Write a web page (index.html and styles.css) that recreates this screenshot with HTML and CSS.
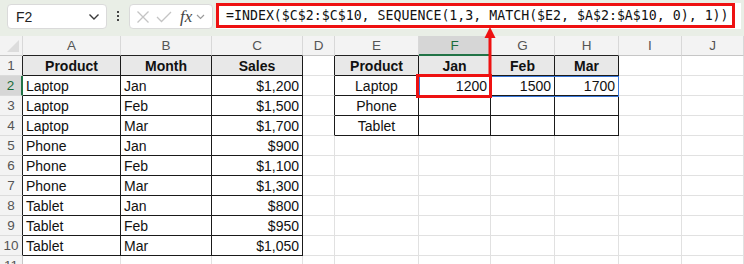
FILE: index.html
```html
<!DOCTYPE html>
<html lang="en">
<head>
    <meta charset="UTF-8">
    <meta name="viewport" content="width=device-width, initial-scale=1.0">
    <title>INDEX SEQUENCE MATCH</title>
    <link rel="stylesheet" href="styles.css">
</head>
<body>
    <div class="topbar">
        <div class="name-box">
            <span>F2</span>
            <svg width="12" height="8" viewBox="0 0 12 8"><polyline points="1.5,1.5 6,6 10.5,1.5" fill="none" stroke="#3a3a3a" stroke-width="1.4"/></svg>
        </div>
        <div class="dots"><i></i><i></i><i></i></div>
        <div class="fx-box">
            <svg width="14" height="14" viewBox="0 0 14 14"><path d="M1.5 1.5 L12.5 12.5 M12.5 1.5 L1.5 12.5" stroke="#c4c4c4" stroke-width="1.3"/></svg>
            <svg width="16" height="12" viewBox="0 0 16 12"><polyline points="1,6 5.5,10.5 15,1" fill="none" stroke="#c4c4c4" stroke-width="1.3"/></svg>
            <span class="fx">fx</span>
            <svg width="9" height="6" viewBox="0 0 9 6"><polyline points="1,1 4.5,4.5 8,1" fill="none" stroke="#9a9a9a" stroke-width="1.2"/></svg>
        </div>
        <div class="formula-wrap">
            <div class="formula">=INDEX($C$2:$C$10, SEQUENCE(1,3, MATCH($E2, $A$2:$A$10, 0), 1))</div>
        </div>
    </div>

    <div class="sheet">
        <!-- column headers -->
        <div class="ch corner"><span class="tri"></span></div>
        <div class="ch tb">A</div><div class="ch tb">B</div><div class="ch tb">C</div><div class="ch">D</div>
        <div class="ch tb">E</div><div class="ch active">F</div><div class="ch tb">G</div><div class="ch tb">H</div>
        <div class="ch">I</div><div class="ch">J</div>

        <!-- row 1 -->
        <div class="rh tb">1</div>
        <div class="c t h">Product</div><div class="c t h">Month</div><div class="c t h">Sales</div><div class="c dr"></div>
        <div class="c t h">Product</div><div class="c t h">Jan</div><div class="c t h">Feb</div><div class="c t h">Mar</div>
        <div class="c"></div><div class="c"></div>

        <!-- row 2 -->
        <div class="rh active">2</div>
        <div class="c t">Laptop</div><div class="c t">Jan</div><div class="c t r">$1,200</div><div class="c dr"></div>
        <div class="c t m">Laptop</div><div class="c t r">1200</div><div class="c t r">1500</div><div class="c t r">1700</div>
        <div class="c"></div><div class="c"></div>

        <!-- row 3 -->
        <div class="rh tb">3</div>
        <div class="c t">Laptop</div><div class="c t">Feb</div><div class="c t r">$1,500</div><div class="c dr"></div>
        <div class="c t m">Phone</div><div class="c t"></div><div class="c t"></div><div class="c t"></div>
        <div class="c"></div><div class="c"></div>

        <!-- row 4 -->
        <div class="rh tb">4</div>
        <div class="c t">Laptop</div><div class="c t">Mar</div><div class="c t r">$1,700</div><div class="c dr"></div>
        <div class="c t m">Tablet</div><div class="c t"></div><div class="c t"></div><div class="c t"></div>
        <div class="c"></div><div class="c"></div>

        <!-- row 5 -->
        <div class="rh tb">5</div>
        <div class="c t">Phone</div><div class="c t">Jan</div><div class="c t r">$900</div><div class="c"></div>
        <div class="c"></div><div class="c"></div><div class="c"></div><div class="c"></div><div class="c"></div><div class="c"></div>

        <!-- row 6 -->
        <div class="rh tb">6</div>
        <div class="c t">Phone</div><div class="c t">Feb</div><div class="c t r">$1,100</div><div class="c"></div>
        <div class="c"></div><div class="c"></div><div class="c"></div><div class="c"></div><div class="c"></div><div class="c"></div>

        <!-- row 7 -->
        <div class="rh tb">7</div>
        <div class="c t">Phone</div><div class="c t">Mar</div><div class="c t r">$1,300</div><div class="c"></div>
        <div class="c"></div><div class="c"></div><div class="c"></div><div class="c"></div><div class="c"></div><div class="c"></div>

        <!-- row 8 -->
        <div class="rh tb">8</div>
        <div class="c t">Tablet</div><div class="c t">Jan</div><div class="c t r">$800</div><div class="c"></div>
        <div class="c"></div><div class="c"></div><div class="c"></div><div class="c"></div><div class="c"></div><div class="c"></div>

        <!-- row 9 -->
        <div class="rh tb">9</div>
        <div class="c t">Tablet</div><div class="c t">Feb</div><div class="c t r">$950</div><div class="c"></div>
        <div class="c"></div><div class="c"></div><div class="c"></div><div class="c"></div><div class="c"></div><div class="c"></div>

        <!-- row 10 -->
        <div class="rh tb">10</div>
        <div class="c t">Tablet</div><div class="c t">Mar</div><div class="c t r">$1,050</div><div class="c"></div>
        <div class="c"></div><div class="c"></div><div class="c"></div><div class="c"></div><div class="c"></div><div class="c"></div>

        <!-- row 11 (cut off) -->
        <div class="rh">11</div>
        <div class="c"></div><div class="c"></div><div class="c"></div><div class="c"></div>
        <div class="c"></div><div class="c"></div><div class="c"></div><div class="c"></div><div class="c"></div><div class="c"></div>
    </div>

    <!-- annotations drawn over the sheet -->
    <svg class="overlay" width="744" height="264" viewBox="0 0 744 264">
        <rect x="419.5" y="76.5" width="199" height="20" fill="none" stroke="#3a78d8" stroke-width="1"/>
        <rect x="417.5" y="75.5" width="73" height="21" fill="none" stroke="#ee1111" stroke-width="3"/>
        <line x1="490" y1="36" x2="490" y2="75" stroke="#ee1111" stroke-width="3"/>
        <polygon points="490,27 484.5,38 495.5,38" fill="#ee1111"/>
    </svg>
</body>
</html>
```

FILE: styles.css
```css
body {
    margin: 0;
    width: 744px;
    height: 264px;
    overflow: hidden;
    position: relative;
    background-color: #fff;
    font-family: "Liberation Sans", Arial, sans-serif;
}
.topbar {
    height: 36px;
    box-sizing: border-box;
    padding: 3px 0 0 7px;
    background-color: #e9eee6;
    display: flex;
    align-items: flex-start;
}
.name-box, .fx-box {
    height: 25px;
    box-sizing: border-box;
    margin-top: 1px;
    background-color: #fff;
    border: 1px solid #dadada;
    border-radius: 4px;
    display: flex;
    align-items: center;
}
.name-box {
    width: 100px;
    padding: 0 6px 0 8px;
    justify-content: space-between;
    font-size: 14px;
    color: #222;
}
.dots {
    width: 22px;
    height: 26px;
    display: flex;
    flex-direction: column;
    align-items: center;
    justify-content: center;
    gap: 2px;
}
.dots i {
    width: 2px;
    height: 2px;
    background-color: #444;
}
.fx-box {
    width: 84px;
    padding: 0 3px 0 6px;
    gap: 6px;
}
.fx-box .fx {
    font-family: "Liberation Serif", serif;
    font-style: italic;
    font-size: 17px;
    color: #444;
    margin-left: 2px;
    margin-right: -2px;
}
.formula-wrap {
    margin-left: 3px;
    width: 525px;
    height: 26px;
    background-color: #fff;
}
.formula {
    height: 25px;
    box-sizing: border-box;
    border: 3px solid #ee1111;
    padding-left: 7px;
    width: 519px;
    font-family: "DejaVu Sans Mono", "Liberation Mono", monospace;
    font-size: 13.25px;
    line-height: 19px;
    color: #111;
    white-space: nowrap;
}
.sheet {
    display: grid;
    grid-template-columns: 23px 98px 91px 91px 32px 84px 72px 64px 64px 63px 62px;
    grid-template-rows: 20px;
    grid-auto-rows: 20px;
}
.sheet > div {
    box-sizing: border-box;
    border-right: 1px solid #e1e1e1;
    border-bottom: 1px solid #e1e1e1;
    white-space: nowrap;
    overflow: hidden;
}
.sheet .ch {
    background-color: #f3f3f3;
    border-right-color: #d8d8d8;
    border-bottom-color: #c6c6c6;
    text-align: center;
    font-size: 13.5px;
    line-height: 19px;
    color: #555;
}
.sheet .ch.tb {
    border-bottom-color: #222;
}
.sheet .ch.active {
    background-color: #d6d6d6;
    border-bottom: 2px solid #217346;
    color: #1b6b3a;
}
.corner {
    position: relative;
}
.corner .tri {
    position: absolute;
    right: 3px;
    bottom: 3px;
    width: 0;
    height: 0;
    border-left: 12px solid transparent;
    border-bottom: 12px solid #dcdcdc;
}
.sheet .rh {
    background-color: #f3f3f3;
    border-right-color: #c6c6c6;
    border-bottom-color: #dcdcdc;
    text-align: center;
    font-size: 13.5px;
    line-height: 20px;
    color: #555;
}
.sheet .rh.tb {
    border-right-color: #222;
}
.sheet .rh.active {
    background-color: #d6d6d6;
    border-right: 2px solid #217346;
    color: #1b6b3a;
}
.c {
    font-family: "Liberation Sans", Arial, sans-serif;
    font-size: 14px;
    line-height: 21px;
    padding: 0 3px;
    color: #111;
}
.sheet .t {
    border-right-color: #1a1a1a;
    border-bottom-color: #1a1a1a;
}
.sheet .dr {
    border-right-color: #1a1a1a;
}
.h {
    background-color: #e8e8e8;
    font-weight: bold;
    text-align: center;
}
.r {
    text-align: right;
}
.m {
    text-align: center;
}
.overlay {
    position: absolute;
    left: 0;
    top: 0;
    pointer-events: none;
}
```
